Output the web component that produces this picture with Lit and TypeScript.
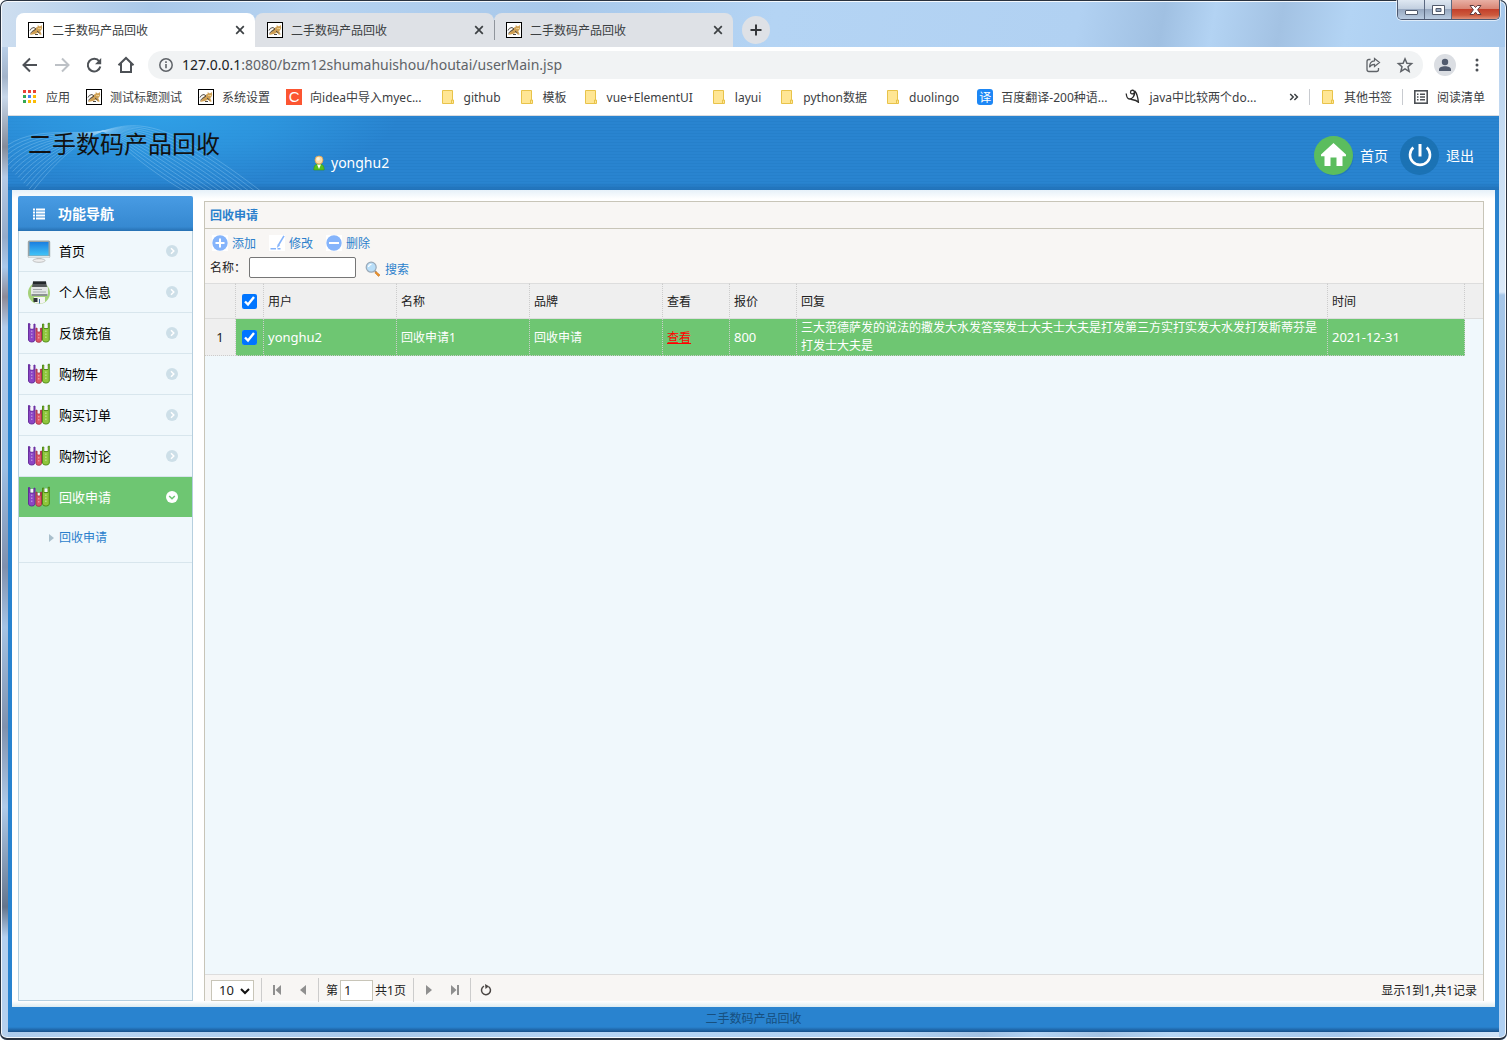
import { LitElement, html, css, svg, nothing } from "lit";
import { customElement, state } from "lit/decorators.js";

/* ---------- shared icons ---------- */

const catIcon = () => html`<svg class="ico16" viewBox="0 0 16 16" aria-hidden="true">
  <rect x=".5" y=".5" width="15" height="15" fill="#fff" stroke="#000"/>
  <path d="M8 5.500L9.500 5 9.800 3l1.400 1.200h1.200L13.800 3l.4 3-1 2.200-1 .8 1.500 3.500-1.700.3-2-2-3 1.200-2.500.5L2 13l2-3 1.500-2z" fill="#cfa055"/>
  <path d="M2 8.500l1.500-2.200 2.500-.8L8 7 6 8.500 4 9.500l-1.500 2M9 9l2.500 2M7 12.500h3" fill="none" stroke="#4e4a45" stroke-width="1"/>
  <path d="M10.500 6.500h1M12.300 6.500h.8" stroke="#fff5c0" stroke-width="1"/>
</svg>`;

const folderIcon = () => html`<svg class="ico16" viewBox="0 0 16 16" aria-hidden="true">
  <path d="M2.500 1.500h10v9.500h1v3.500h-11z" fill="#ffe694" stroke="#e8c34a"/>
  <path d="M11.500 14v-3h1.500" fill="none" stroke="#e8c34a"/>
</svg>`;

const appsIcon = () => {
  const colors = ["#ea4335", "#ea4335", "#ea4335", "#34a853", "#4285f4", "#fbbc05", "#34a853", "#fbbc05", "#fbbc05"];
  return html`<svg class="ico16" viewBox="0 0 16 16" aria-hidden="true">
    ${colors.map((c, i) => svg`<rect x=${1 + (i % 3) * 5} y=${1 + Math.floor(i / 3) * 5} width="3" height="3" fill=${c}/>`)}
  </svg>`;
};

const javaIcon = () => html`<svg class="ico16" viewBox="0 0 16 16" aria-hidden="true">
  <path d="M1.200 4.500c.3 3 .8 5.500 3.300 5.500 3 0 5.500-3.500 5-7C9 .5 5.500.8 5.500 3.200c0 2 2.500 2.200 3.500.8M9.800 2c2.200 2.500 3.200 6.500 3.700 12M4.500 10c2 .8 6 .2 9 3.200" fill="none" stroke="#2b2b2b" stroke-width="1.300"/>
</svg>`;

const plus = () => html`<svg class="ico16" viewBox="0 0 16 16" aria-hidden="true">
  <rect width="16" height="16" fill="#fff"/><circle cx="8" cy="8" r="7.700" fill="#85b4fb"/>
  <path d="M8 3.500v9M3.500 8h9" stroke="#fff" stroke-width="2"/></svg>`;
const minus = () => html`<svg class="ico16" viewBox="0 0 16 16" aria-hidden="true">
  <rect width="16" height="16" fill="#fff"/><circle cx="8" cy="8" r="7.700" fill="#85b4fb"/>
  <path d="M3 8h10" stroke="#fff" stroke-width="2"/></svg>`;
const pen = () => html`<svg class="ico16" viewBox="0 0 16 16" aria-hidden="true">
  <rect width="16" height="16" fill="#fff"/>
  <path d="M15 .8L9.500 10" stroke="#85b4fb" stroke-width="1.600"/><path d="M8.800 9l-1 4 3.200-2.500z" fill="#85b4fb"/>
  <path d="M1.500 13.800h5.500M8.500 13.800h3" stroke="#85b4fb" stroke-width="1.400"/></svg>`;
const magnifier = () => html`<svg class="ico16" viewBox="0 0 16 16" aria-hidden="true">
  <path d="M9.500 9.500l2 2" stroke="#8a97a5" stroke-width="1.500"/>
  <path d="M11 10.500l4 3.500-1.500 1.500-3.700-3.800z" fill="#f0932a" stroke="#b4681c" stroke-width=".5"/>
  <circle cx="6.200" cy="6.200" r="5" fill="#b9def8" stroke="#9aa9b8" stroke-width="1.200"/>
  <path d="M3.500 6c.3-1.700 1.500-2.500 3-2.600" stroke="#fff" fill="none" stroke-width="1.200"/></svg>`;

const monitorIcon = () => html`<svg class="ico24" viewBox="0 0 24 24" aria-hidden="true">
  <defs><linearGradient id="scr" x1="0" y1="0" x2="0" y2="1"><stop offset="0" stop-color="#1b7fe0"/><stop offset="1" stop-color="#42c4f7"/></linearGradient></defs>
  <rect x=".8" y="1.500" width="22.400" height="17.500" rx="1.500" fill="#98a3a6"/>
  <rect x="1.300" y="17" width="21.400" height="1.800" fill="#e2e6e6"/>
  <rect x="2.500" y="3" width="19" height="13.500" fill="url(#scr)"/>
  <path d="M9.500 19h5v2h-5z" fill="#c9c9c9"/><ellipse cx="12" cy="21.500" rx="6" ry="1.800" fill="#eee" stroke="#b5b5b5" stroke-width=".8"/></svg>`;
const profileIcon = () => html`<svg class="ico24" viewBox="0 0 24 24" aria-hidden="true">
  <circle cx="12" cy="13" r="11" fill="#a5d17a"/>
  <path d="M6 1.500h13l1 5.500H5z" fill="#55595b"/><path d="M6 1.500h13v2.500H6z" fill="#23282b"/>
  <rect x="4" y="7" width="17" height="9" rx="1" fill="#e4e7e7"/>
  <path d="M6 9.500h9M6 12h13" stroke="#a5aaac" stroke-width="1"/><path d="M4.500 15h16" stroke="#6e7476" stroke-width="1.500"/>
  <path d="M7 17h11v5l-3 1.500H8z" fill="#f4f4f4"/><path d="M6.500 18h4v4h-4z" fill="#2e3436"/><path d="M12.500 19v4.500" stroke="#356ea5" fill="none"/></svg>`;
const booksIcon = () => html`<svg class="ico24" viewBox="0 0 24 24" aria-hidden="true">
  <path d="M1.500 2.500v16.500a3 2.500 0 0 0 3 2h.5a3 2.500 0 0 0 3-2V3l-1.200.4V8H3V2.900z" fill="#8b45c4" stroke="#5d2496" stroke-width=".9"/>
  <path d="M9 7v12.500a2.500 2 0 0 0 2.500 1.800h.5a2.500 2 0 0 0 2.500-1.800V7l-1.200.5v3.300h-3.100V7.500z" fill="#dd5566" stroke="#a52a44" stroke-width=".9"/>
  <path d="M15.500 3v16a3 2.500 0 0 0 3 2h.8a3 2.500 0 0 0 3-2V2l-1.300.5v5H17V3.200z" fill="#8fc63c" stroke="#47850f" stroke-width=".9"/>
  <path d="M3.500 4h2.800v3.500H3.500zM10.700 8h2.100v2.500h-2.100zM17.500 3.500h3V7h-3z" fill="#f7f3fb"/>
  <path d="M4.800 9.500v8.500M11.800 13v5.500M18.900 9.500v8.500" stroke="#fff" stroke-opacity=".55" stroke-dasharray="1.500 1.500"/></svg>`;

const markRight = () => html`<svg class="ico12" viewBox="0 0 12 12" aria-hidden="true">
  <circle cx="6" cy="6" r="6" fill="#cddfe8"/><path d="M5 3.200L7.800 6 5 8.800" fill="none" stroke="#fff" stroke-width="1.500"/></svg>`;
const markDown = () => html`<svg class="ico12" viewBox="0 0 12 12" aria-hidden="true">
  <circle cx="6" cy="6" r="6" fill="#fff"/><path d="M3.200 5L6 7.800 8.800 5" fill="none" stroke="#6ec672" stroke-width="1.500"/></svg>`;

/* ---------- browser chrome ---------- */

@customElement("browser-tabs")
class BrowserTabs extends LitElement {
  static styles = css`
    :host { display: flex; align-items: flex-start; height: 47px; margin: 0 -8px; padding: 0 7px 0 16px; }
    button { border: 0; background: none; padding: 0; font: inherit; color: inherit; }
    svg { display: block; flex: none; }
    .ico16 { width: 16px; height: 16px; }
    .tabs { display: flex; margin-top: 13px; height: 34px; }
    .tab { box-sizing: border-box; display: flex; align-items: center; gap: 8px; width: 239px; padding: 0 10px 0 12px; border-radius: 8px 8px 0 0; background: #dee1e6; color: #3c4043; font-size: 12px; line-height: 20px; }
    .tab.active { background: #fff; }
    .tab.divided { background: linear-gradient(#90959c, #90959c) left center / 1px 20px no-repeat #dee1e6; }
    .title { flex: 1; padding-top: 2px; text-align: left; white-space: nowrap; }
    .close { width: 10px; height: 10px; }
    .new { display: flex; align-items: center; justify-content: center; width: 28px; height: 28px; margin: 16px 0 0 9px; border-radius: 14px; background: #dee1e6; }
    .win { display: flex; margin: 0 0 0 auto; height: 19px; border: 1px solid #4c5870; border-top: 0; border-radius: 0 0 5px 5px; overflow: hidden; box-shadow: 0 0 0 1px rgba(255,255,255,.6); }
    .win button { display: flex; align-items: center; justify-content: center; width: 27px; border-right: 1px solid #5b6981; background: linear-gradient(#dfe8f2 0, #c3d0e0 45%, #97a8c0 50%, #b9cbe0 100%); }
    .win .x { width: 47px; border-right: 0; background: linear-gradient(#e8b0a4 0, #d98675 45%, #c3402b 50%, #cd5a3d 80%, #e0917a 100%); }
  `;
  render() {
    return html`
      <div class="tabs" role="tablist">
        ${["active", "", "divided"].map((c) => html`
          <div class="tab ${c}" role="presentation">
            ${catIcon()}
            <button class="title" role="tab" aria-selected=${c === "active"}>二手数码产品回收</button>
            <button aria-label="关闭"><svg class="close" viewBox="0 0 10 10"><path d="M1.200 1.200l7.600 7.600M8.800 1.200L1.200 8.800" stroke="#3c4043" stroke-width="1.700"/></svg></button>
          </div>`)}
      </div>
      <button class="new" aria-label="新标签页"><svg width="12" height="12" viewBox="0 0 12 12"><path d="M6 .5v11M.5 6h11" stroke="#35383b" stroke-width="2"/></svg></button>
      <div class="win">
        <button aria-label="最小化"><svg width="13" height="12" viewBox="0 0 13 12"><rect x=".5" y="6.500" width="12" height="4" rx=".5" fill="#fff" stroke="#515a6b"/></svg></button>
        <button aria-label="还原"><svg width="13" height="12" viewBox="0 0 13 12"><path d="M.5 1.500h12v9H.5z M4 4.500v3h5v-3z" fill="#fff" fill-rule="evenodd" stroke="#515a6b"/></svg></button>
        <button class="x" aria-label="关闭窗口"><svg width="13" height="12" viewBox="0 0 13 12"><path d="M1 1.500h3.700l1.800 2 1.800-2H12L8.600 5.800 12 10.500H8.300l-1.800-2.300-1.800 2.300H1l3.400-4.700z" fill="#fff" stroke="#5e3a3d"/></svg></button>
      </div>`;
  }
}

@customElement("browser-toolbar")
class BrowserToolbar extends LitElement {
  static styles = css`
    :host { display: flex; align-items: center; height: 36px; padding: 0 12px; background: #fff; }
    button { display: flex; border: 0; background: none; padding: 0; }
    svg { display: block; }
    .nav { display: flex; gap: 12px; margin-right: 12px; }
    .box { flex: 1; display: flex; align-items: center; height: 28px; padding: 0 8px; border-radius: 14px; background: #f1f3f4; }
    .url { flex: 1; margin-left: 6px; font-size: 14px; line-height: 24px; color: #5f6368; white-space: nowrap; }
    .host { color: #202124; }
    .tools { display: flex; gap: 12px; }
    .avatar { margin: 0 11px; border-radius: 11px; }
  `;
  render() {
    return html`
      <div class="nav">
        <button aria-label="后退"><svg width="20" height="20" viewBox="0 0 20 20"><path d="M17 10H4M10 3.500L3.500 10l6.500 6.500" fill="none" stroke="#4d5156" stroke-width="2"/></svg></button>
        <button aria-label="前进"><svg width="20" height="20" viewBox="0 0 20 20"><path d="M3 10h13M10 3.500l6.500 6.500-6.500 6.500" fill="none" stroke="#bdc1c6" stroke-width="2"/></svg></button>
        <button aria-label="刷新"><svg width="20" height="20" viewBox="0 0 20 20"><path d="M15.300 6.500A6.300 6.300 0 1 0 16.300 11.500" fill="none" stroke="#4d5156" stroke-width="2"/><path d="M17.200 3v6.200H11z" fill="#4d5156"/></svg></button>
        <button aria-label="主页"><svg width="20" height="20" viewBox="0 0 20 20"><path d="M2.500 10.300L10 3l7.500 7.300M5 8.500V17h10V8.500" fill="none" stroke="#4d5156" stroke-width="2"/></svg></button>
      </div>
      <div class="box">
        <svg width="20" height="20" viewBox="0 0 20 20"><circle cx="10" cy="10" r="6.200" fill="none" stroke="#5f6368" stroke-width="1.500"/><path d="M10 9v4.300M10 6.300v1.600" stroke="#5f6368" stroke-width="1.600"/></svg>
        <span class="url"><span class="host">127.0.0.1</span>:8080/bzm12shumahuishou/houtai/userMain.jsp</span>
        <span class="tools">
          <button aria-label="分享"><svg width="20" height="20" viewBox="0 0 20 20"><path d="M7.500 4.500H6A2 2 0 0 0 4 6.500v8a2 2 0 0 0 2 2h7.500a2 2 0 0 0 2-2V13" fill="none" stroke="#5f6368" stroke-width="1.300"/><path d="M11.500 3.500l5 4-5 4V9.300c-2.500 0-4 .8-5 3 0-4 2-6.300 5-6.500z" fill="none" stroke="#5f6368" stroke-width="1.200"/></svg></button>
          <button aria-label="收藏"><svg width="20" height="20" viewBox="0 0 20 20"><path d="M10 3.800l1.900 4.400 4.700.4-3.600 3.100 1.100 4.600-4.100-2.500-4.100 2.500 1.100-4.600L3.400 8.600l4.700-.4z" fill="none" stroke="#5f6368" stroke-width="1.500"/></svg></button>
        </span>
      </div>
      <button class="avatar" aria-label="用户"><svg width="22" height="22" viewBox="0 0 22 22"><circle cx="11" cy="11" r="11" fill="#dbdee3"/><circle cx="11" cy="8" r="3.200" fill="#515b6e"/><path d="M5 17v-1.500c0-2.500 3-3.300 6-3.300s6 .8 6 3.300V17z" fill="#515b6e"/></svg></button>
      <button aria-label="菜单"><svg width="20" height="20" viewBox="0 0 20 20"><g fill="#4d5156"><circle cx="10" cy="5" r="1.500"/><circle cx="10" cy="10" r="1.500"/><circle cx="10" cy="15" r="1.500"/></g></svg></button>`;
  }
}

const BOOKMARKS: { label: string; icon: string }[] = [
  { label: "应用", icon: "apps" },
  { label: "测试标题测试", icon: "cat" },
  { label: "系统设置", icon: "cat" },
  { label: "向idea中导入myec...", icon: "c" },
  { label: "github", icon: "folder" },
  { label: "模板", icon: "folder" },
  { label: "vue+ElementUI", icon: "folder" },
  { label: "layui", icon: "folder" },
  { label: "python数据", icon: "folder" },
  { label: "duolingo", icon: "folder" },
  { label: "百度翻译-200种语...", icon: "yi" },
  { label: "java中比较两个do...", icon: "java" },
];

@customElement("bookmark-bar")
class BookmarkBar extends LitElement {
  static styles = css`
    :host { display: flex; align-items: center; box-sizing: border-box; height: 33px; padding: 0 14px 4px; background: #fff; border-bottom: 1px solid #dadce0; font-size: 12px; line-height: 20px; }
    a { display: flex; align-items: center; gap: 8px; color: #3c4043; text-decoration: none; white-space: nowrap; }
    svg { display: block; flex: none; }
    .ico16 { width: 16px; height: 16px; }
    .label { padding-top: 2px; }
    .mixed { padding-right: 2px; }
    .list { flex: 1; display: flex; gap: 16px; }
    .tile { width: 16px; height: 16px; line-height: 16px; text-align: center; color: #fff; background: #fc5531; font-family: "Liberation Sans", sans-serif; font-size: 15px; }
    .tile.yi { background: #1d87f5; border-radius: 3px; font-family: "Noto Sans CJK SC", sans-serif; font-size: 12px; }
    .end { display: flex; align-items: center; gap: 10px; }
    .sep { width: 1px; height: 16px; background: #c8cbd0; }
    .more { border: 0; background: none; padding: 0; color: #3c4043; display: flex; }
  `;
  private icon(kind: string) {
    switch (kind) {
      case "apps": return appsIcon();
      case "cat": return catIcon();
      case "java": return javaIcon();
      case "c": return html`<span class="tile">C</span>`;
      case "yi": return html`<span class="tile yi">译</span>`;
      default: return folderIcon();
    }
  }
  render() {
    return html`
      <nav class="list">${BOOKMARKS.map((b) => html`<a href="#">${this.icon(b.icon)}<span class="label ${/[a-z0-9]/.test(b.label) ? "mixed" : ""}">${b.label}</span></a>`)}</nav>
      <div class="end">
        <button class="more" aria-label="更多书签"><svg width="10" height="10" viewBox="0 0 10 10"><path d="M1.200 2l3 3-3 3M5.400 2l3 3-3 3" fill="none" stroke="#3c4043" stroke-width="1.500"/></svg></button>
        <span class="sep"></span>
        <a href="#">${folderIcon()}<span class="label">其他书签</span></a>
        <span class="sep"></span>
        <a href="#"><svg class="ico16" viewBox="0 0 16 16"><rect x="1.800" y="1.800" width="12.400" height="12.400" fill="none" stroke="#4d5156" stroke-width="1.600"/><path d="M4 5.200h1.500M7 5.200h5M4 8h1.500M7 8h5M4 10.800h1.500M7 10.800h5" stroke="#4d5156" stroke-width="1.400"/></svg><span class="label">阅读清单</span></a>
      </div>`;
  }
}

/* ---------- application ---------- */

@customElement("app-banner")
class AppBanner extends LitElement {
  static styles = css`
    :host { box-sizing: border-box; position: relative; display: flex; align-items: flex-start; height: 74px; padding: 12px 25px 0 20px; color: #fff; overflow: hidden;
      background: radial-gradient(ellipse 240px 70px at 150px 0, #2f9fe6 0, rgba(47,159,230,.6) 50%, rgba(41,132,208,0) 100%), linear-gradient(transparent 90%, rgba(20,80,140,.35)), repeating-linear-gradient(#2984d0 0, #2984d0 2px, #2680cb 2px, #2680cb 3px); }
    .waves { position: absolute; left: 0; top: 0; width: 260px; height: 74px; }
    h1 { position: relative; margin: 0; color: #111; font-size: 24px; font-weight: 400; line-height: 32px; }
    .user { display: flex; align-items: center; gap: 4px; margin: 25px 0 0 91px; font-size: 14px; line-height: 20px; }
    .actions { display: flex; gap: 12px; margin: 8px 0 0 auto; }
    a { display: flex; align-items: center; gap: 6px; color: #fff; text-decoration: none; font-size: 14px; line-height: 20px; }
    svg { display: block; }
  `;
  render() {
    const lines = Array.from({ length: 14 }, (_, i) => i / 13);
    return html`
      <svg class="waves" viewBox="0 0 260 74" aria-hidden="true">
        ${lines.map((t) => svg`<path d="M${-12 + 36 * t} ${38 + 38 * t}C${20 + 24 * t} ${8 + 42 * t} ${58 + 10 * t} ${20 + 6 * t} 95 15C${130 - 18 * t} ${4 + 22 * t} ${160 - 30 * t} ${4 + 44 * t} ${254 - 76 * t} 76" fill="none" stroke="#9fd3f5" stroke-opacity=".38" stroke-width=".9"/>`)}
      </svg>
      <h1>二手数码产品回收</h1>
      <div class="user">
        <svg width="16" height="16" viewBox="0 0 16 16" aria-hidden="true"><path d="M2.800 15c0-4 1.500-6.300 5.200-6.300S13.200 11 13.200 15z" fill="#55c01e" stroke="#3a9413" stroke-width=".6"/><path d="M6 9.500h4L8 14z" fill="#fff"/><circle cx="8" cy="5" r="4" fill="#fbdca6" stroke="#dfa04d" stroke-width=".8"/><circle cx="7.200" cy="4" r="1.700" fill="#fff3da"/></svg>
        <span>yonghu2</span>
      </div>
      <nav class="actions">
        <a href="#"><svg width="40" height="40" viewBox="0 0 40 40" aria-hidden="true"><circle cx="20.500" cy="21" r="19" fill="#1f6fb4" opacity=".6"/><circle cx="19.500" cy="19.500" r="19.500" fill="#5bbd5e"/><path d="M19.500 7L7 18.500v1.800h3.500V30h6v-8.500h6V30h6v-9.700H32v-1.800z" fill="#fff"/></svg><span>首页</span></a>
        <a href="#"><svg width="40" height="40" viewBox="0 0 40 40" aria-hidden="true"><circle cx="19.500" cy="19.500" r="19.500" fill="#1b72b4"/><path d="M13.300 11.500a10 10 0 1 0 13.400 0" fill="none" stroke="#fff" stroke-width="2.600"/><path d="M20 8v12.500" stroke="#fff" stroke-width="3"/></svg><span>退出</span></a>
      </nav>`;
  }
}

const MENU: { label: string; icon: () => unknown; children?: string[] }[] = [
  { label: "首页", icon: monitorIcon },
  { label: "个人信息", icon: profileIcon },
  { label: "反馈充值", icon: booksIcon },
  { label: "购物车", icon: booksIcon },
  { label: "购买订单", icon: booksIcon },
  { label: "购物讨论", icon: booksIcon },
  { label: "回收申请", icon: booksIcon, children: ["回收申请"] },
];

@customElement("side-menu")
class SideMenu extends LitElement {
  static styles = css`
    :host { display: flex; flex-direction: column; width: 175px; flex: none; background: #f0f8fc; }
    .head { display: flex; align-items: center; gap: 13px; height: 35px; padding-left: 15px; border-radius: 2px 2px 0 0; background: linear-gradient(#489be3 0, #3689d1 88%, #2670b2 100%); color: #fff; font-size: 14px; font-weight: 700; line-height: 20px; }
    .list { flex: 1; margin: 0; padding: 0; list-style: none; border: 1px solid #b6cfdf; border-top: 0; }
    .item { box-sizing: border-box; display: flex; align-items: center; gap: 8px; width: 100%; height: 41px; padding: 0 14px 0 8px; border: 0; border-bottom: 1px solid #d8e6ed; background: none; font: inherit; font-size: 13px; line-height: 20px; color: #000; text-align: left; }
    .item.open { height: 40px; background: #6ec672; border: 0; color: #fff; }
    .label { flex: 1; padding-bottom: 1px; }
    .sub { margin: 0; padding: 0; list-style: none; border-bottom: 1px solid #d8e6ed; }
    .sub a { display: flex; align-items: center; gap: 5px; box-sizing: border-box; height: 45px; padding: 0 0 3px 30px; color: #2b7fcc; text-decoration: none; font-size: 12px; line-height: 20px; }
    svg { display: block; flex: none; }
    .ico24 { width: 24px; height: 24px; }
    .ico12 { width: 12px; height: 12px; }
  `;
  @state() private open = 6;
  render() {
    return html`
      <div class="head"><svg width="12" height="12" viewBox="0 0 12 12" aria-hidden="true"><path d="M0 1.500h2M3 1.500h9M0 4.500h2M3 4.500h9M0 7.500h2M3 7.500h9M0 10.500h2M3 10.500h9" stroke="#fff" stroke-width="1.800"/></svg><span>功能导航</span></div>
      <ul class="list">
        ${MENU.map((m, i) => {
          const open = i === this.open;
          return html`<li>
            <button class="item ${open ? "open" : ""}" aria-expanded=${open} @click=${() => (this.open = i)}>
              ${m.icon()}<span class="label">${m.label}</span>${open ? markDown() : markRight()}
            </button>
            ${open && m.children ? html`<ul class="sub">${m.children.map((c) => html`<li><a href="#"><svg width="5" height="8" viewBox="0 0 5 8" aria-hidden="true"><path d="M0 0l5 4-5 4z" fill="#a9bfcc"/></svg>${c}</a></li>`)}</ul>` : nothing}
          </li>`;
        })}
      </ul>`;
  }
}

const ROWS = [
  { user: "yonghu2", name: "回收申请1", brand: "回收申请", price: "800", reply: "三大范德萨发的说法的撒发大水发答案发士大夫士大夫是打发第三方实打实发大水发打发斯蒂芬是打发士大夫是", date: "2021-12-31" },
];

@customElement("data-panel")
class DataPanel extends LitElement {
  static styles = css`
    :host { flex: 1; min-width: 0; display: flex; flex-direction: column; margin-top: 5px; border: 1px solid #c8c5b8; border-bottom: 0; background: #f0f8fc; font-size: 12px; line-height: 18px; color: #222; }
    h2 { margin: 0; height: 26px; padding-left: 5px; border-bottom: 1px solid #c8c5b8; background: #f8f6f4; color: #2a80cc; font-size: 12px; font-weight: 700; line-height: 27px; }
    .tools { background: #f8f6f4; padding: 4px 5px 5px; display: flex; flex-direction: column; gap: 4px; }
    .line { display: flex; align-items: center; gap: 13px; height: 20px; padding-left: 2px; }
    .search { display: flex; align-items: center; gap: 3px; height: 21px; }
    button { display: flex; align-items: center; gap: 4px; border: 0; padding: 0; background: none; font: inherit; color: #2b7fcc; }
    button span { padding-top: 2px; }
    svg { display: block; flex: none; }
    .ico16 { width: 16px; height: 16px; }
    .query { box-sizing: border-box; width: 107px; height: 21px; border: 1px solid #767676; border-radius: 2px; background: #fff; margin-right: 6px; padding: 1px 2px; }
    .search button { padding-top: 3px; }
    .grid { flex: 1; }
    table { width: 100%; table-layout: fixed; border-collapse: separate; border-spacing: 0; }
    th, td { box-sizing: border-box; padding: 0 4px; text-align: left; font-weight: 400; border-right: 1px dotted #ccc; }
    th { height: 36px; background: #efefef; border-top: 1px solid #ddd; border-bottom: 1px solid #ddd; }
    td { height: 37px; background: #6ec672; color: #fff; border-bottom: 1px dotted #ccc; line-height: 18px; }
    th.han, td.han { padding-top: 2px; }
    td.num { background: #efefef; color: #222; text-align: center; }
    th.gut { border-right: 0; }
    td.gut { background: none; border: 0; }
    .latin { font-size: 13px; }
    .c-num { width: 31px; } .c-check { width: 28px; } .c-mid { width: 133px; } .c-small { width: 67px; } .c-date { width: 137px; } .c-gut { width: 18px; }
    .box { display: block; width: 15px; height: 15px; margin: 0 auto; accent-color: #0075ff; }
    td a { color: #f00; }
    .pager { display: flex; align-items: center; flex: none; box-sizing: border-box; height: 27px; padding: 4px 6px 0; border-top: 1px solid #ddd; background: #f8f6f4; }
    .size { position: relative; display: block; }
    .size select { appearance: none; box-sizing: border-box; display: block; width: 43px; height: 21px; padding: 0 0 1px 7px; border: 1px solid #c8c5b8; background: #fff; font: inherit; font-size: 13px; line-height: 18px; color: #222; border-radius: 0; }
    .size svg { position: absolute; right: 4px; top: 8px; pointer-events: none; }
    .sep { width: 1px; height: 24px; margin: 0 7px; background: #ccc; }
    .pbtn { width: 16px; height: 16px; justify-content: center; }
    .pbtn + .pbtn { margin-left: 10px; }
    .page { box-sizing: border-box; width: 33px; height: 21px; margin: 0 2px; border: 1px solid #c8c5b8; padding: 0 3px; font: inherit; font-size: 13px; color: #222; }
    .text { padding-top: 2px; }
    .info { margin-left: auto; }
  `;
  @state() private picked = ROWS.map(() => true);
  render() {
    const all = this.picked.every(Boolean);
    return html`
      <h2>回收申请</h2>
      <div class="tools">
        <div class="line">
          <button>${plus()}<span>添加</span></button><button>${pen()}<span>修改</span></button><button>${minus()}<span>删除</span></button>
        </div>
        <div class="search">
          <label for="q">名称：</label><input class="query" id="q" type="text"><button>${magnifier()}<span>搜索</span></button>
        </div>
      </div>
      <div class="grid">
        <table>
          <colgroup><col class="c-num"><col class="c-check"><col class="c-mid"><col class="c-mid"><col class="c-mid"><col class="c-small"><col class="c-small"><col><col class="c-date"><col class="c-gut"></colgroup>
          <thead><tr>
            <th></th>
            <th><input class="box" type="checkbox" aria-label="全选" .checked=${all} @change=${() => (this.picked = this.picked.map(() => !all))}></th>
            ${["用户", "名称", "品牌", "查看", "报价", "回复", "时间"].map((t) => html`<th class="han">${t}</th>`)}
            <th class="gut"></th>
          </tr></thead>
          <tbody>${ROWS.map((r, i) => html`<tr>
            <td class="num latin">${i + 1}</td>
            <td><input class="box" type="checkbox" aria-label="选择" .checked=${this.picked[i]} @change=${() => (this.picked = this.picked.map((v, n) => (n === i ? !v : v)))}></td>
            <td class="latin">${r.user}</td><td class="han">${r.name}</td><td class="han">${r.brand}</td><td class="han"><a href="#">查看</a></td><td class="latin">${r.price}</td><td>${r.reply}</td><td class="latin">${r.date}</td>
            <td class="gut"></td>
          </tr>`)}</tbody>
        </table>
      </div>
      <div class="pager">
        <span class="size"><select aria-label="每页条数"><option>10</option><option>20</option></select><svg width="10" height="7" viewBox="0 0 10 7"><path d="M1 1l4 4 4-4" fill="none" stroke="#111" stroke-width="2"/></svg></span>
        <span class="sep"></span>
        <button class="pbtn" aria-label="第一页"><svg width="10" height="10" viewBox="0 0 10 10"><path d="M1 0h2v10H1zM9 0v10L3.500 5z" fill="#8f8f8f"/></svg></button>
        <button class="pbtn" aria-label="上一页"><svg width="10" height="10" viewBox="0 0 10 10"><path d="M8 0v10L2 5z" fill="#8f8f8f"/></svg></button>
        <span class="sep"></span>
        <label class="text" for="pg">第</label><input class="page" id="pg" type="text" .value=${"1"}><span class="text">共1页</span>
        <span class="sep"></span>
        <button class="pbtn" aria-label="下一页"><svg width="10" height="10" viewBox="0 0 10 10"><path d="M2 0v10l6-5z" fill="#8f8f8f"/></svg></button>
        <button class="pbtn" aria-label="最后一页"><svg width="10" height="10" viewBox="0 0 10 10"><path d="M7 0h2v10H7zM1 0v10l5.500-5z" fill="#8f8f8f"/></svg></button>
        <span class="sep"></span>
        <button class="pbtn" aria-label="刷新"><svg width="12" height="12" viewBox="0 0 12 12"><path d="M4 2.200A4.500 4.500 0 1 0 8.500 2.500" fill="none" stroke="#4a4644" stroke-width="1.500"/><path d="M5 0l4 2.200L5.500 5z" fill="#4a4644"/></svg></button>
        <span class="info text">显示1到1,共1记录</span>
      </div>`;
  }
}

@customElement("app-root")
class AppRoot extends LitElement {
  static styles = css`
    :host { display: block; font-family: "Noto Sans", "Noto Sans CJK SC", sans-serif; }
    .window { box-sizing: border-box; position: relative; display: flex; flex-direction: column; min-height: 100vh; padding: 0 8px 8px 8px; border-radius: 7px 7px 6px 6px; background:
      linear-gradient(#b8d2ee, #cfe2f5 150px, #dbe9f8 245px, #a6c6e8 248px, #9dbfe4 420px, #b0d0f2 900px) right 0 top 47px / 8px 100% no-repeat,
      linear-gradient(#b9cfe8, #a3b4ca 30px, #c8d8ea 50px, #858c9a 100px, #b5cae5 130px, #95abc9 190px, #abc9ea 220px, #8e8a96 250px, #b2cbe9 280px, #9dbfe4 420px, #8090ad 520px, #a5c3e4 580px, #8091ad 680px, #b0cbe9 760px, #65758c 860px, #b5d0ee 890px) left 0 top 47px / 8px 100% no-repeat,
      linear-gradient(100deg, #cfdff0 0, #a9c8e9 9%, #b6d3f1 18%, #a8c8ea 33%, #b4d4f4 46%, #b1d1f2 64%, #a0c0e2 69%, #b3d3f3 72%, #a3c2e3 76%, #b3d4f4 80%, #a6c8ec 90%, #d3e5f8 100%); }
    .frame { position: absolute; inset: 0; border: 1px solid #29323f; border-bottom-width: 2px; border-radius: 7px; box-shadow: inset 0 0 0 1px rgba(255,255,255,.85); pointer-events: none; box-sizing: border-box; }
    browser-tabs { position: relative; }
    .page { flex: 1; display: flex; flex-direction: column; background: #2983cf; }
    .body { flex: 1; display: flex; gap: 11px; margin: 0 4px; padding: 6px 11px 6px 6px; background: linear-gradient(#e6f1f9, #fff 9px, #fff calc(100% - 6px), #dcebf1 100%); }
    footer { height: 25px; box-sizing: border-box; padding-top: 2px; text-align: center; font-size: 12px; line-height: 20px; color: #17507f; background: linear-gradient(transparent 20px, #17508a 25px); }
  `;
  render() {
    return html`<div class="window">
      <div class="frame"></div>
      <browser-tabs></browser-tabs>
      <browser-toolbar></browser-toolbar>
      <bookmark-bar></bookmark-bar>
      <main class="page">
        <app-banner></app-banner>
        <div class="body"><side-menu></side-menu><data-panel></data-panel></div>
        <footer>二手数码产品回收</footer>
      </main>
    </div>`;
  }
}
